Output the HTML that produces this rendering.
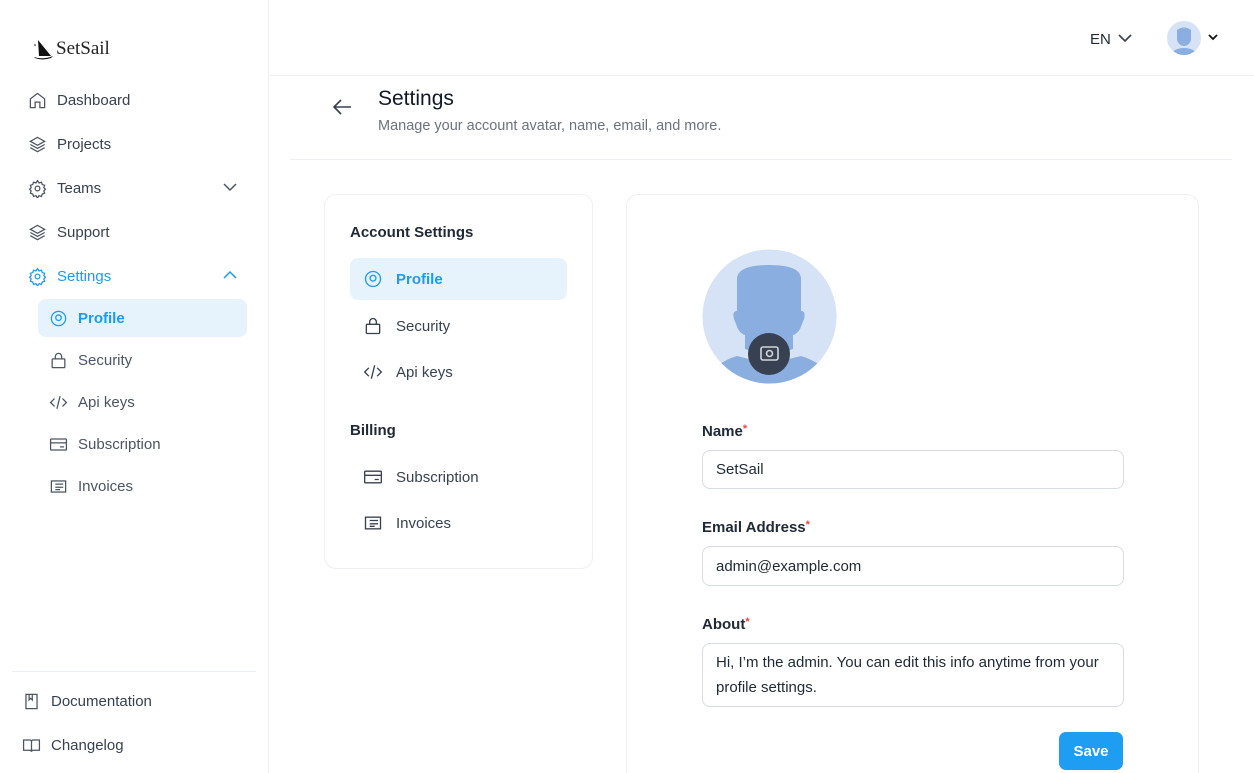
<!DOCTYPE html><html><head><style>
*{box-sizing:border-box;margin:0;padding:0}
html,body{width:1254px;height:773px;overflow:hidden}
body{font-family:"Liberation Sans",sans-serif;background:#fff;color:#1f2937;position:relative}
.sb{position:absolute;left:0;top:0;width:269px;height:773px;border-right:1px solid #eceff3}
.ni{position:absolute;left:28px;display:flex;align-items:center;font-size:15px;color:#374151}
.ni svg{width:19px;height:19px;flex-shrink:0;margin-right:10px;stroke:#4b5563;fill:none;stroke-width:1.6}
.sub{position:absolute;left:38px;width:209px;height:38px;display:flex;align-items:center;padding-left:11px;font-size:15px;color:#4b5563;border-radius:8px}
.sub svg{width:19px;height:19px;flex-shrink:0;margin-right:10px;stroke:#4b5563;fill:none;stroke-width:1.6}
.blue{color:#1e9af0!important}.blue svg{stroke:#1e9af0!important}
.hd{position:absolute;left:269px;top:0;right:0;height:76px;border-bottom:1px solid #eef0f3}
.card{position:absolute;border:1px solid #eef0f3;border-radius:12px;background:#fff}
.ci{position:absolute;left:25px;width:217px;height:42px;display:flex;align-items:center;padding-left:13px;font-size:15px;color:#374151;border-radius:8px}
.ci svg{width:20px;height:20px;flex-shrink:0;margin-right:13px;stroke:#374151;fill:none;stroke-width:1.6}
.lbl{position:absolute;left:702px;font-size:15px;font-weight:bold;color:#1f2937}
.lbl span{color:#ef4444;font-size:11px;vertical-align:top}
.inp{position:absolute;left:702px;width:422px;border:1px solid #d8dce2;border-radius:8px;font-size:15px;padding:0 13px;display:flex;align-items:center;color:#1f2937}
</style></head><body>
<div class="sb">
<div style="position:absolute;left:32px;top:37px;display:flex;align-items:center">
<svg width="22" height="24" viewBox="0 0 22 24"><path d="M6 3 L19 19 L7 19 Z" fill="#111"/><path d="M2 20 Q11 23 21 19 L19 21 Q10 24 3 21Z" fill="#111"/><circle cx="3" cy="8" r=".8" fill="#111"/></svg>
<span style="font-family:'Liberation Serif',serif;font-size:19px;margin-left:2px;color:#222">SetSail</span></div>
<div class="ni" style="top:91px"><svg viewBox="0 0 24 24"><path d="M3 10l9-7 9 7v11h-6v-7H9v7H3z"/></svg>Dashboard</div>
<div class="ni" style="top:135px"><svg viewBox="0 0 24 24"><path d="M12 3l9 5-9 5-9-5z M3 12l9 5 9-5 M3 16l9 5 9-5"/></svg>Projects</div>
<div class="ni" style="top:179px"><svg viewBox="0 0 24 24"><circle cx="12" cy="12" r="3"/><path d="M12 2l2 3 3-1 1 3 3 1-1 3 2 2-2 2 1 3-3 1-1 3-3-1-2 3-2-3-3 1-1-3-3-1 1-3-2-2 2-2-1-3 3-1 1-3 3 1z"/></svg>Teams</div>
<svg style="position:absolute;left:223px;top:182px" width="14" height="10" viewBox="0 0 14 10"><path d="M1 2l6 6 6-6" stroke="#4b5563" fill="none" stroke-width="1.5"/></svg>
<div class="ni" style="top:223px"><svg viewBox="0 0 24 24"><path d="M12 3l9 5-9 5-9-5z M3 12l9 5 9-5 M3 16l9 5 9-5"/></svg>Support</div>
<div class="ni blue" style="top:267px"><svg viewBox="0 0 24 24"><circle cx="12" cy="12" r="3"/><path d="M12 2l2 3 3-1 1 3 3 1-1 3 2 2-2 2 1 3-3 1-1 3-3-1-2 3-2-3-3 1-1-3-3-1 1-3-2-2 2-2-1-3 3-1 1-3 3 1z"/></svg>Settings</div>
<svg style="position:absolute;left:223px;top:270px" width="14" height="10" viewBox="0 0 14 10"><path d="M1 8l6-6 6 6" stroke="#1e9af0" fill="none" stroke-width="1.5"/></svg>
<div class="sub blue" style="top:299px;background:#e6f3fd;font-weight:bold"><svg viewBox="0 0 24 24"><circle cx="12" cy="12" r="9"/><circle cx="12" cy="11" r="3.5"/></svg>Profile</div>
<div class="sub" style="top:341px"><svg viewBox="0 0 24 24"><rect x="4" y="10" width="16" height="11" rx="1"/><path d="M8 10V7a4 4 0 018 0v3"/></svg>Security</div>
<div class="sub" style="top:383px"><svg viewBox="0 0 24 24"><path d="M7 7l-5 5 5 5M17 7l5 5-5 5M14 4l-4 16"/></svg>Api keys</div>
<div class="sub" style="top:425px"><svg viewBox="0 0 24 24"><rect x="2" y="5" width="20" height="14" rx="1"/><path d="M2 10h20M14 15h5"/></svg>Subscription</div>
<div class="sub" style="top:467px"><svg viewBox="0 0 24 24"><rect x="3" y="5" width="18" height="14"/><path d="M8 9h10M8 13h10M8 16h6"/></svg>Invoices</div>
<div style="position:absolute;left:12px;right:12px;top:671px;border-top:1px solid #eceff3"></div>
<div class="ni" style="top:692px;left:22px"><svg viewBox="0 0 24 24"><path d="M5 3h14v18H5z M9 3v7l2-2 2 2V3"/></svg>Documentation</div>
<div class="ni" style="top:736px;left:22px"><svg viewBox="0 0 24 24"><path d="M2 5h8a2 2 0 012 2v13a2 2 0 00-2-2H2z M22 5h-8a2 2 0 00-2 2v13a2 2 0 012-2h8z"/></svg>Changelog</div>
</div>
<div class="hd">
<div style="position:absolute;left:821px;top:31px;font-size:15px;color:#1f2937">EN</div>
<svg style="position:absolute;left:849px;top:33px" width="14" height="10" viewBox="0 0 14 10"><path d="M1 2l6 6 6-6" stroke="#374151" fill="none" stroke-width="1.6"/></svg>
<svg style="position:absolute;left:898px;top:21px" width="34" height="34" viewBox="0 0 34 34"><defs><clipPath id="c2"><circle cx="17" cy="17" r="17"/></clipPath></defs><circle cx="17" cy="17" r="17" fill="#d6e2f5"/><g clip-path="url(#c2)" fill="#8aaee0"><path d="M10 9q7-5 14 0v10q-2 6-7 6t-7-6z"/><path d="M2 36q4-9 15-9t15 9z"/></g></svg>
<svg style="position:absolute;left:939px;top:33px" width="10" height="8" viewBox="0 0 10 8"><path d="M1 2l4 4 4-4" stroke="#111" fill="none" stroke-width="1.8"/></svg>
</div>
<svg style="position:absolute;left:332px;top:98px" width="20" height="18" viewBox="0 0 20 18"><path d="M19 9H2M9 2L2 9l7 7" stroke="#374151" fill="none" stroke-width="1.6"/></svg>
<div style="position:absolute;left:378px;top:87px;font-size:21px;color:#111827">Settings</div>
<div style="position:absolute;left:378px;top:118px;font-size:14.5px;color:#6b7280">Manage your account avatar, name, email, and more.</div>
<div style="position:absolute;left:290px;width:942px;top:159px;border-top:1px solid #eef0f3"></div>
<div class="card" style="left:324px;top:194px;width:269px;height:375px">
<div style="position:absolute;left:25px;top:29px;font-size:15px;font-weight:bold;color:#1f2937">Account Settings</div>
<div class="ci blue" style="top:63px;background:#e6f3fd;font-weight:bold"><svg viewBox="0 0 24 24"><circle cx="12" cy="12" r="9"/><circle cx="12" cy="11" r="3.5"/></svg>Profile</div>
<div class="ci" style="top:110px"><svg viewBox="0 0 24 24"><rect x="4" y="10" width="16" height="11" rx="1"/><path d="M8 10V7a4 4 0 018 0v3"/></svg>Security</div>
<div class="ci" style="top:156px"><svg viewBox="0 0 24 24"><path d="M7 7l-5 5 5 5M17 7l5 5-5 5M14 4l-4 16"/></svg>Api keys</div>
<div style="position:absolute;left:25px;top:227px;font-size:15px;font-weight:bold;color:#1f2937">Billing</div>
<div class="ci" style="top:261px"><svg viewBox="0 0 24 24"><rect x="2" y="5" width="20" height="14" rx="1"/><path d="M2 10h20M14 15h5"/></svg>Subscription</div>
<div class="ci" style="top:307px"><svg viewBox="0 0 24 24"><rect x="3" y="5" width="18" height="14"/><path d="M8 9h10M8 13h10M8 16h6"/></svg>Invoices</div>
</div>
<div class="card" style="left:626px;top:194px;width:573px;height:600px"></div>
<svg style="position:absolute;left:702px;top:249px" width="135" height="135" viewBox="0 0 135 135"><defs><clipPath id="c"><circle cx="67.5" cy="67.5" r="67"/></clipPath></defs><circle cx="67.5" cy="67.5" r="67" fill="#d6e2f5"/><g clip-path="url(#c)" fill="#8aaee0"><path d="M35 30q0-14 32-14q32 0 32 14v32q5 0 3 8l-4 10q-3 5-7 6v14l-24 8-24-8v-14q-4-1-7-6l-4-10q-2-8 3-8z"/><path d="M0 140q8-25 35-33l32 8 32-8q27 8 35 33z"/></g><circle cx="67" cy="105" r="21" fill="#374151"/><rect x="59" y="98" width="17" height="13" rx="2" stroke="#d1d5db" fill="none" stroke-width="1.6"/><circle cx="67.5" cy="104.5" r="3" stroke="#d1d5db" fill="none" stroke-width="1.6"/></svg>
<div class="lbl" style="top:423px">Name<span>*</span></div>
<div class="inp" style="top:450px;height:39px">SetSail</div>
<div class="lbl" style="top:519px">Email Address<span>*</span></div>
<div class="inp" style="top:546px;height:40px">admin@example.com</div>
<div class="lbl" style="top:616px">About<span>*</span></div>
<div class="inp" style="top:643px;height:64px;line-height:25px;align-items:center">Hi, I’m the admin. You can edit this info anytime from your profile settings.</div>
<div style="position:absolute;left:1059px;top:732px;width:64px;height:38px;border-radius:7px;background:#1e9df2;color:#fff;font-size:15px;font-weight:bold;display:flex;align-items:center;justify-content:center">Save</div>
</body></html>
